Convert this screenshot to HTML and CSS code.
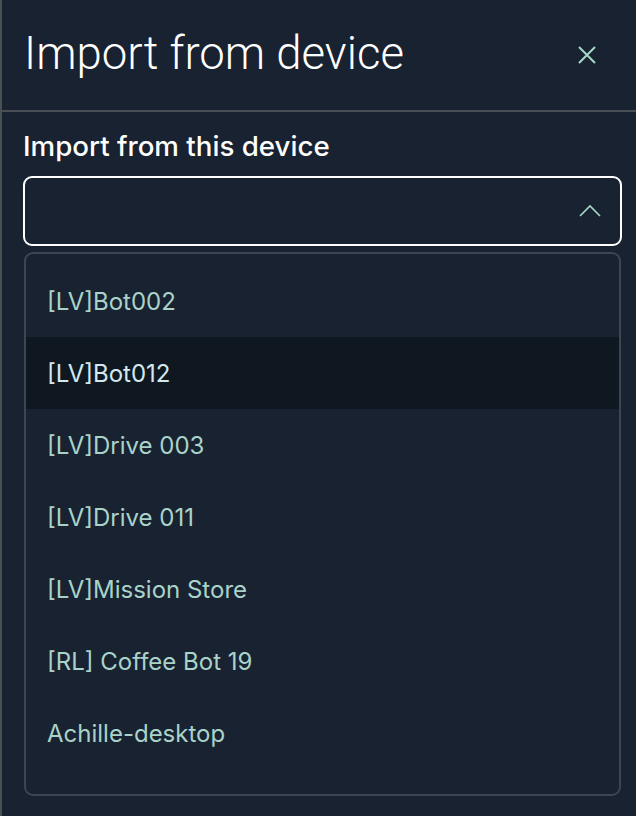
FILE: index.html
```html
<!DOCTYPE html>
<html>
<head>
<meta charset="utf-8">
<link rel="stylesheet" href="styles.css">
</head>
<body>
<div class="panel">
  <header class="header">
    <h1 class="title">Import from device</h1>
    <button class="close" aria-label="Close">
      <svg width="20" height="20" viewBox="0 0 20 20"><path d="M2 2 L18 18 M18 2 L2 18" stroke="#a6d8c9" stroke-width="2" fill="none"/></svg>
    </button>
  </header>
  <div class="divider"></div>
  <section class="body">
    <label class="label">Import from this device</label>
    <div class="select">
      <svg class="chev" width="22" height="14" viewBox="0 0 22 14"><path d="M1 12 L11 2 L21 12" stroke="#a6d8c9" stroke-width="1.6" fill="none"/></svg>
    </div>
    <ul class="list">
      <li class="item">[LV]Bot002</li>
      <li class="item active">[LV]Bot012</li>
      <li class="item">[LV]Drive 003</li>
      <li class="item">[LV]Drive 011</li>
      <li class="item">[LV]Mission Store</li>
      <li class="item">[RL] Coffee Bot 19</li>
      <li class="item">Achille-desktop</li>
    </ul>
  </section>
</div>
</body>
</html>
```

FILE: styles.css
```css
html, body {
  margin: 0;
  padding: 0;
  background: #182231;
}
.panel {
  width: 636px;
  height: 816px;
  box-sizing: border-box;
  border-left: 2px solid #4a4f55;
  background: #182231;
  overflow: hidden;
}
.header {
  height: 110px;
  display: flex;
  align-items: center;
  justify-content: space-between;
  padding: 0 39px 0 22px;
  box-sizing: border-box;
}
.title {
  margin: 0;
  font-family: Roboto, "Liberation Sans", sans-serif;
  font-weight: 300;
  font-size: 45.5px;
  color: #ffffff;
  letter-spacing: 0;
  padding-bottom: 4px;
}
.close {
  background: none;
  border: 0;
  padding: 0;
  width: 20px;
  height: 20px;
  display: flex;
}
.divider {
  height: 2px;
  background: #4a4f55;
}
.body {
  padding: 18px 14px 0 21px;
  display: flex;
  flex-direction: column;
}
.label {
  font-family: Inter, "Noto Sans", sans-serif;
  font-weight: 500;
  font-size: 27.7px;
  color: #ffffff;
  line-height: 32px;
}
.select {
  margin-top: 14px;
  height: 70px;
  box-sizing: border-box;
  border: 2px solid #ffffff;
  border-radius: 9px;
  display: flex;
  align-items: center;
  justify-content: flex-end;
  padding-right: 19px;
}
.chev {
  display: block;
}
.list {
  list-style: none;
  margin: 6px 1px 0 1px;
  padding: 11px 0 25px 0;
  border: 2px solid #3d4650;
  border-radius: 9px;
}
.item {
  height: 72px;
  display: flex;
  align-items: center;
  padding-left: 21px;
  font-family: Inter, "Noto Sans", sans-serif;
  font-size: 24px;
  color: #a9d3c9;
}
.item.active {
  background: #0f1821;
  color: #d3e8ee;
}
```
